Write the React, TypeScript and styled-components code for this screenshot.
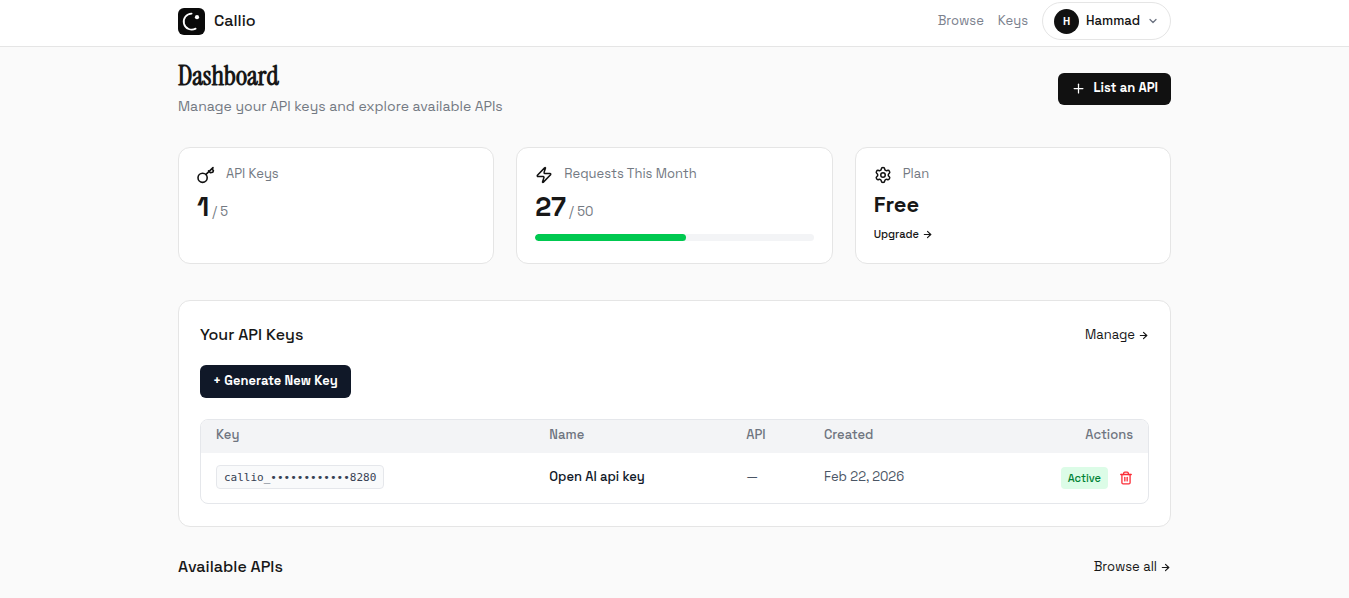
import React from "react";
import styled, { createGlobalStyle } from "styled-components";
import { ArrowRight, ChevronDown, Plus, Settings, Trash2, Zap } from "lucide-react";

const GlobalStyle = createGlobalStyle`
  * { box-sizing: border-box; }
  body {
    margin: 0;
    background: #fafafa;
    color: #171717;
    font-family: "Space Grotesk", Inter, sans-serif;
    font-size: 13px;
    line-height: 18px;
  }
  h1, h2, p { margin: 0; }
  a { color: inherit; text-decoration: none; }
  button { font: inherit; border: 0; cursor: pointer; }
  svg { flex: none; }
`;

const Container = styled.div`
  width: 100%;
  max-width: 1037px;
  margin: 0 auto;
  padding: 0 22px;
`;

const Header = styled.header`
  background: #fff;
  border-bottom: 1px solid #e5e5e5;
`;

const HeaderRow = styled(Container)`
  display: flex;
  align-items: center;
  justify-content: space-between;
  padding-top: 2px;
  padding-bottom: 6px;
`;

const Brand = styled.a`
  display: flex;
  align-items: center;
  gap: 9px;
  font-size: 16px;
  font-weight: 500;
`;

const Nav = styled.nav`
  display: flex;
  align-items: center;
  gap: 14px;
`;

const NavLink = styled.a`
  color: #7b818d;
`;

const UserButton = styled.button`
  display: flex;
  align-items: center;
  gap: 7px;
  height: 38px;
  padding: 0 11px;
  border: 1px solid #e5e5e5;
  border-radius: 19px;
  background: #fff;
  color: #111;
  font-weight: 500;
  svg { color: #6b7280; }
`;

const Avatar = styled.span`
  display: grid;
  place-items: center;
  width: 25px;
  height: 25px;
  border-radius: 50%;
  background: #111;
  color: #fff;
  font-size: 11px;
  font-weight: 700;
`;

const Main = styled(Container).attrs({ as: "main" })`
  padding-top: 13px;
  padding-bottom: 20px;
`;

const PageHead = styled.div`
  display: flex;
  align-items: center;
  justify-content: space-between;
  margin-bottom: 30px;
`;

const Title = styled.h1`
  font-family: "Instrument Serif", "Liberation Serif", serif;
  font-size: 27px;
  line-height: 32px;
  font-weight: 700;
`;

const Subtitle = styled.p`
  padding-top: 4px;
  padding-bottom: 1px;
  color: #737982;
  font-size: 14px;
  line-height: 20px;
`;

const DarkButton = styled.button<{ $navy?: boolean }>`
  display: inline-flex;
  align-items: center;
  gap: 7px;
  height: ${(p) => (p.$navy ? 33 : 32)}px;
  padding: 0 13px 1px;
  border-radius: 6px;
  background: ${(p) => (p.$navy ? "#101828" : "#111")};
  color: #fff;
  font-weight: 600;
`;

const Stats = styled.section`
  display: grid;
  grid-template-columns: repeat(3, 1fr);
  gap: 22px;
  margin-bottom: 36px;
`;

const Card = styled.article`
  min-height: 117px;
  padding: 17px 18px;
  border: 1px solid #e5e5e5;
  border-radius: 12px;
  background: #fff;
`;

const CardLabel = styled.div`
  display: flex;
  align-items: flex-start;
  gap: 11px;
  color: #737982;
  svg { margin-top: 1px; color: #111; }
`;

const Amount = styled.div`
  display: flex;
  align-items: baseline;
  gap: 3px;
  padding-top: 7px;
  color: #737982;
`;

const Big = styled.strong`
  color: #171717;
  font-size: 27px;
  line-height: 32px;
  font-weight: 700;
`;

const PlanName = styled.div`
  padding-top: 6px;
  font-size: 22px;
  line-height: 28px;
  font-weight: 600;
`;

const Track = styled.div`
  height: 7px;
  margin-top: 11px;
  border-radius: 4px;
  background: #f3f4f6;
  overflow: hidden;
`;

const Fill = styled.div`
  height: 100%;
  border-radius: 4px;
  background: #00c950;
`;

const ArrowLink = styled.a<{ $small?: boolean }>`
  display: inline-flex;
  align-items: center;
  gap: 3px;
  color: #171717;
  font-size: ${(p) => (p.$small ? 11 : 13)}px;
  font-weight: ${(p) => (p.$small ? 500 : 400)};
`;

const UpgradeRow = styled.div`
  display: flex;
  padding-top: 7px;
`;

const Panel = styled.section`
  margin-bottom: 28px;
  padding: 22px 21px;
  border: 1px solid #e5e5e5;
  border-radius: 12px;
  background: #fff;
`;

const SectionHead = styled.div`
  display: flex;
  align-items: center;
  justify-content: space-between;
`;

const SectionTitle = styled.h2`
  font-size: 16px;
  line-height: 24px;
  font-weight: 500;
`;

const PanelAction = styled.div`
  display: flex;
  padding: 18px 0 21px;
`;

const TableFrame = styled.div`
  border: 1px solid #e5e7eb;
  border-radius: 8px;
  overflow: hidden;
`;

const Table = styled.table`
  width: 100%;
  table-layout: fixed;
  border-collapse: collapse;
`;

const Th = styled.th<{ $width?: number; $end?: boolean }>`
  width: ${(p) => (p.$width ? `${p.$width}%` : "auto")};
  height: 33px;
  padding: 0 15px 4px;
  background: #f3f4f6;
  color: #6f7580;
  font-weight: 500;
  text-align: ${(p) => (p.$end ? "right" : "left")};
`;

const Td = styled.td<{ $strong?: boolean }>`
  height: 50px;
  padding: 0 15px 2px;
  color: ${(p) => (p.$strong ? "#101828" : "#4a5565")};
  font-weight: ${(p) => (p.$strong ? 500 : 400)};
`;

const KeyCode = styled.code`
  display: inline-block;
  padding: 3px 7px 1px;
  border: 1px solid #e5e7eb;
  border-radius: 4px;
  background: #f9fafb;
  color: #364153;
  font-family: Consolas, "DejaVu Sans Mono", monospace;
  font-size: 11px;
  vertical-align: middle;
`;

const Actions = styled.div`
  display: flex;
  align-items: center;
  justify-content: flex-end;
  gap: 11px;
  padding-top: 2px;
`;

const Status = styled.span`
  padding: 2px 7px;
  border-radius: 4px;
  background: #dcfce7;
  color: #008236;
  font-size: 11px;
  font-weight: 500;
`;

const IconButton = styled.button`
  display: flex;
  padding: 0;
  background: none;
  color: #fb2c36;
`;

function Logo() {
  return (
    <svg width="27" height="27" viewBox="0 0 27 27" fill="none" aria-hidden="true">
      <rect width="27" height="27" rx="6" fill="#0a0a0a" />
      <path d="M13.6 5.6A8 8 0 1 0 17.6 20.6" stroke="#fff" strokeWidth="1.8" strokeLinecap="round" />
      <circle cx="19" cy="9.2" r="2.1" fill="#fff" />
    </svg>
  );
}

function KeyIcon() {
  return (
    <svg width="18" height="18" viewBox="0 0 18 18" fill="none" stroke="currentColor" strokeWidth="1.6" strokeLinecap="round" strokeLinejoin="round" aria-hidden="true">
      <circle cx="5.6" cy="11.8" r="4.6" />
      <path d="M9 8.4 16 1.6l-.6 1.8 1 1.2-.6 1.6-2.4.5-1.8-1.8" />
    </svg>
  );
}

function Arrow() {
  return <ArrowRight size={11} strokeWidth={2.5} aria-hidden="true" />;
}

export default function App() {
  const used = 27;
  const limit = 50;
  return (
    <>
      <GlobalStyle />
      <Header>
        <HeaderRow>
          <Brand href="#"><Logo />Callio</Brand>
          <Nav>
            <NavLink href="#browse">Browse</NavLink>
            <NavLink href="#keys">Keys</NavLink>
            <UserButton type="button">
              <Avatar>H</Avatar>Hammad<ChevronDown size={12} strokeWidth={2.5} />
            </UserButton>
          </Nav>
        </HeaderRow>
      </Header>
      <Main>
        <PageHead>
          <div>
            <Title>Dashboard</Title>
            <Subtitle>Manage your API keys and explore available APIs</Subtitle>
          </div>
          <DarkButton type="button"><Plus size={15} strokeWidth={2} />List an API</DarkButton>
        </PageHead>
        <Stats>
          <Card>
            <CardLabel><KeyIcon />API Keys</CardLabel>
            <Amount><Big>1</Big>/ 5</Amount>
          </Card>
          <Card>
            <CardLabel><Zap size={18} />Requests This Month</CardLabel>
            <Amount><Big>{used}</Big>/ {limit}</Amount>
            <Track><Fill style={{ width: `${(used / limit) * 100}%` }} /></Track>
          </Card>
          <Card>
            <CardLabel><Settings size={18} />Plan</CardLabel>
            <PlanName>Free</PlanName>
            <UpgradeRow><ArrowLink $small href="#upgrade">Upgrade <Arrow /></ArrowLink></UpgradeRow>
          </Card>
        </Stats>
        <Panel>
          <SectionHead>
            <SectionTitle>Your API Keys</SectionTitle>
            <ArrowLink href="#manage">Manage <Arrow /></ArrowLink>
          </SectionHead>
          <PanelAction><DarkButton $navy type="button">+ Generate New Key</DarkButton></PanelAction>
          <TableFrame>
            <Table>
              <thead>
                <tr>
                  <Th $width={35.2}>Key</Th>
                  <Th $width={20.8}>Name</Th>
                  <Th $width={8.2}>API</Th>
                  <Th>Created</Th>
                  <Th $end>Actions</Th>
                </tr>
              </thead>
              <tbody>
                <tr>
                  <Td><KeyCode>callio_••••••••••••8280</KeyCode></Td>
                  <Td $strong>Open AI api key</Td>
                  <Td>—</Td>
                  <Td>Feb 22, 2026</Td>
                  <Td>
                    <Actions>
                      <Status>Active</Status>
                      <IconButton type="button" aria-label="Delete key"><Trash2 size={14} strokeWidth={2.25} /></IconButton>
                    </Actions>
                  </Td>
                </tr>
              </tbody>
            </Table>
          </TableFrame>
        </Panel>
        <SectionHead>
          <SectionTitle>Available APIs</SectionTitle>
          <ArrowLink href="#browse-all">Browse all <Arrow /></ArrowLink>
        </SectionHead>
      </Main>
    </>
  );
}
